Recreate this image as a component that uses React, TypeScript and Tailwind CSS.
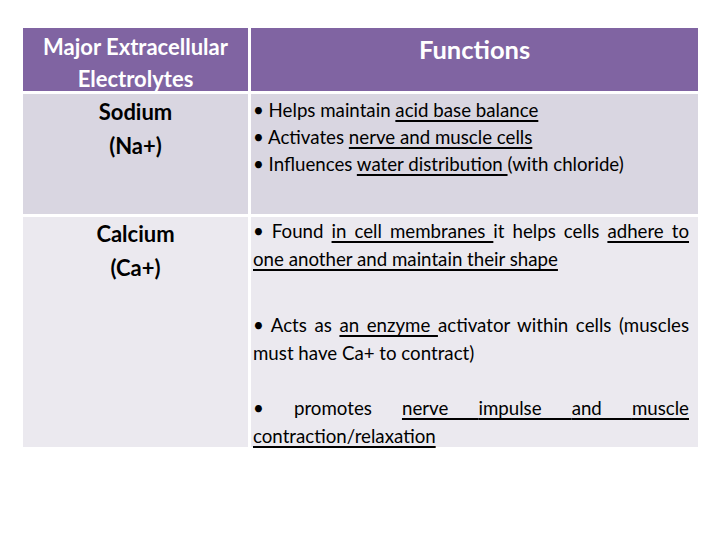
const font = { fontFamily: 'Lato, "Open Sans", sans-serif' }

function U({ children }: { children: React.ReactNode }) {
  return <span className="underline decoration-[1.5px] underline-offset-[3px]">{children}</span>
}

function Line({ children, full }: { children: React.ReactNode; full?: boolean }) {
  return (
    <div className={full ? 'text-justify [text-align-last:justify]' : ''}>{children}</div>
  )
}

export default function App() {
  return (
    <div className="w-[720px] h-[540px] bg-white text-black" style={font}>
      <div className="ml-[23px] pt-[28px] grid grid-cols-[225px_447px] grid-rows-[63px_120px_230px] gap-[3px]">
        {/* header */}
        <div className="bg-[#8064a2] text-white font-bold text-[22px] leading-[32px] text-center pt-[3px] whitespace-nowrap">
          Major Extracellular
          <br />
          Electrolytes
        </div>
        <div className="bg-[#8064a2] text-white font-bold text-[25.5px] leading-[32px] text-center pt-[5px]">
          Functions
        </div>

        {/* sodium */}
        <div className="bg-[#d9d6e1] font-bold text-[22px] leading-[34px] text-center pt-[1px]">
          Sodium
          <br />
          (Na+)
        </div>
        <div className="bg-[#d9d6e1] text-[18.7px] leading-[27px] pl-[2px] pt-[3px]">
          <div>• Helps maintain <U>acid base balance</U></div>
          <div>• Activates <U>nerve and muscle cells</U></div>
          <div>
            • Influences <U>water distribution </U>(with chloride)
          </div>
        </div>

        {/* calcium */}
        <div className="bg-[#ebe9ef] font-bold text-[22px] leading-[34px] text-center">
          Calcium
          <br />
          (Ca+)
        </div>
        <div className="bg-[#ebe9ef] text-[18.7px] leading-[28px] pl-[2px] pr-[9px]">
          <Line full>
            • Found <U>in cell membranes </U>it helps cells <U>adhere to</U>
          </Line>
          <Line>
            <U>one another and maintain their shape</U>
          </Line>
          <div className="h-[38px]" />
          <Line full>• Acts as <U>an enzyme </U>activator within cells (muscles</Line>
          <Line>must have Ca+ to contract)</Line>
          <div className="h-[27px]" />
          <Line full>
            • promotes <U>nerve </U> <U>impulse </U> <U>and </U> <U>muscle</U>
          </Line>
          <Line>
            <U>contraction/relaxation</U>
          </Line>
        </div>
      </div>
    </div>
  )
}
